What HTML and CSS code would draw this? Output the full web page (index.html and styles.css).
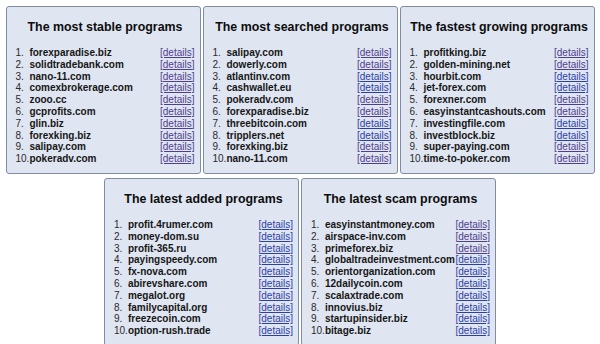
FILE: index.html
```html
<!DOCTYPE html>
<html>
<head>
<meta charset="utf-8">
<link rel="stylesheet" href="styles.css">
</head>
<body>
<div class="page">
  <div class="row">
    <div class="box">
      <h2 class="title">The most stable programs</h2>
      <table class="list">
        <tr><td class="n">1.</td><td class="d">forexparadise.biz</td><td class="l"><a class="v">[details]</a></td></tr>
        <tr><td class="n">2.</td><td class="d">solidtradebank.com</td><td class="l"><a class="v">[details]</a></td></tr>
        <tr><td class="n">3.</td><td class="d">nano-11.com</td><td class="l"><a class="v">[details]</a></td></tr>
        <tr><td class="n">4.</td><td class="d">comexbrokerage.com</td><td class="l"><a class="v">[details]</a></td></tr>
        <tr><td class="n">5.</td><td class="d">zooo.cc</td><td class="l"><a class="v">[details]</a></td></tr>
        <tr><td class="n">6.</td><td class="d">gcprofits.com</td><td class="l"><a class="v">[details]</a></td></tr>
        <tr><td class="n">7.</td><td class="d">glin.biz</td><td class="l"><a class="v">[details]</a></td></tr>
        <tr><td class="n">8.</td><td class="d">forexking.biz</td><td class="l"><a class="v">[details]</a></td></tr>
        <tr><td class="n">9.</td><td class="d">salipay.com</td><td class="l"><a class="v">[details]</a></td></tr>
        <tr><td class="n">10.</td><td class="d">pokeradv.com</td><td class="l"><a class="v">[details]</a></td></tr>
      </table>
    </div>
    <div class="box">
      <h2 class="title">The most searched programs</h2>
      <table class="list">
        <tr><td class="n">1.</td><td class="d">salipay.com</td><td class="l"><a class="v">[details]</a></td></tr>
        <tr><td class="n">2.</td><td class="d">dowerly.com</td><td class="l"><a class="v">[details]</a></td></tr>
        <tr><td class="n">3.</td><td class="d">atlantinv.com</td><td class="l"><a class="u">[details]</a></td></tr>
        <tr><td class="n">4.</td><td class="d">cashwallet.eu</td><td class="l"><a class="u">[details]</a></td></tr>
        <tr><td class="n">5.</td><td class="d">pokeradv.com</td><td class="l"><a class="v">[details]</a></td></tr>
        <tr><td class="n">6.</td><td class="d">forexparadise.biz</td><td class="l"><a class="v">[details]</a></td></tr>
        <tr><td class="n">7.</td><td class="d">threebitcoin.com</td><td class="l"><a class="u">[details]</a></td></tr>
        <tr><td class="n">8.</td><td class="d">tripplers.net</td><td class="l"><a class="u">[details]</a></td></tr>
        <tr><td class="n">9.</td><td class="d">forexking.biz</td><td class="l"><a class="v">[details]</a></td></tr>
        <tr><td class="n">10.</td><td class="d">nano-11.com</td><td class="l"><a class="v">[details]</a></td></tr>
      </table>
    </div>
    <div class="box">
      <h2 class="title">The fastest growing programs</h2>
      <table class="list">
        <tr><td class="n">1.</td><td class="d">profitking.biz</td><td class="l"><a class="v">[details]</a></td></tr>
        <tr><td class="n">2.</td><td class="d">golden-mining.net</td><td class="l"><a class="v">[details]</a></td></tr>
        <tr><td class="n">3.</td><td class="d">hourbit.com</td><td class="l"><a class="u">[details]</a></td></tr>
        <tr><td class="n">4.</td><td class="d">jet-forex.com</td><td class="l"><a class="u">[details]</a></td></tr>
        <tr><td class="n">5.</td><td class="d">forexner.com</td><td class="l"><a class="v">[details]</a></td></tr>
        <tr><td class="n">6.</td><td class="d">easyinstantcashouts.com</td><td class="l"><a class="v">[details]</a></td></tr>
        <tr><td class="n">7.</td><td class="d">investingfile.com</td><td class="l"><a class="u">[details]</a></td></tr>
        <tr><td class="n">8.</td><td class="d">investblock.biz</td><td class="l"><a class="u">[details]</a></td></tr>
        <tr><td class="n">9.</td><td class="d">super-paying.com</td><td class="l"><a class="v">[details]</a></td></tr>
        <tr><td class="n">10.</td><td class="d">time-to-poker.com</td><td class="l"><a class="v">[details]</a></td></tr>
      </table>
    </div>
  </div>
  <div class="row">
    <div class="box">
      <h2 class="title">The latest added programs</h2>
      <table class="list">
        <tr><td class="n">1.</td><td class="d">profit.4rumer.com</td><td class="l"><a class="u">[details]</a></td></tr>
        <tr><td class="n">2.</td><td class="d">money-dom.su</td><td class="l"><a class="u">[details]</a></td></tr>
        <tr><td class="n">3.</td><td class="d">profit-365.ru</td><td class="l"><a class="u">[details]</a></td></tr>
        <tr><td class="n">4.</td><td class="d">payingspeedy.com</td><td class="l"><a class="u">[details]</a></td></tr>
        <tr><td class="n">5.</td><td class="d">fx-nova.com</td><td class="l"><a class="u">[details]</a></td></tr>
        <tr><td class="n">6.</td><td class="d">abirevshare.com</td><td class="l"><a class="u">[details]</a></td></tr>
        <tr><td class="n">7.</td><td class="d">megalot.org</td><td class="l"><a class="u">[details]</a></td></tr>
        <tr><td class="n">8.</td><td class="d">familycapital.org</td><td class="l"><a class="u">[details]</a></td></tr>
        <tr><td class="n">9.</td><td class="d">freezecoin.com</td><td class="l"><a class="u">[details]</a></td></tr>
        <tr><td class="n">10.</td><td class="d">option-rush.trade</td><td class="l"><a class="u">[details]</a></td></tr>
      </table>
    </div>
    <div class="box">
      <h2 class="title">The latest scam programs</h2>
      <table class="list">
        <tr><td class="n">1.</td><td class="d">easyinstantmoney.com</td><td class="l"><a class="v">[details]</a></td></tr>
        <tr><td class="n">2.</td><td class="d">airspace-inv.com</td><td class="l"><a class="v">[details]</a></td></tr>
        <tr><td class="n">3.</td><td class="d">primeforex.biz</td><td class="l"><a class="v">[details]</a></td></tr>
        <tr><td class="n">4.</td><td class="d">globaltradeinvestment.com</td><td class="l"><a class="u">[details]</a></td></tr>
        <tr><td class="n">5.</td><td class="d">orientorganization.com</td><td class="l"><a class="u">[details]</a></td></tr>
        <tr><td class="n">6.</td><td class="d">12dailycoin.com</td><td class="l"><a class="u">[details]</a></td></tr>
        <tr><td class="n">7.</td><td class="d">scalaxtrade.com</td><td class="l"><a class="u">[details]</a></td></tr>
        <tr><td class="n">8.</td><td class="d">innovius.biz</td><td class="l"><a class="u">[details]</a></td></tr>
        <tr><td class="n">9.</td><td class="d">startupinsider.biz</td><td class="l"><a class="u">[details]</a></td></tr>
        <tr><td class="n">10.</td><td class="d">bitage.biz</td><td class="l"><a class="u">[details]</a></td></tr>
      </table>
    </div>
  </div>
</div>
</body>
</html>
```

FILE: styles.css
```css
html, body {
  margin: 0;
  padding: 0;
  background: #ffffff;
}
body {
  font-family: "Liberation Sans", Arial, sans-serif;
  color: #111;
}
.page {
  padding: 6px 0 0 0;
  display: flex;
  flex-direction: column;
  gap: 4px;
}
.row {
  display: flex;
  justify-content: center;
  gap: 2px;
}
.box {
  box-sizing: border-box;
  width: 195px;
  height: 168px;
  flex: none;
  border: 1px solid #7f8ca3;
  border-radius: 3px;
  background: #dfe5f1;
  padding: 12px 5px 0 9px;
}
.title {
  margin: 0 0 12px 0;
  font-size: 12.4px;
  line-height: 16px;
  font-weight: bold;
  text-align: center;
  color: #0d0d0d;
}
.list {
  width: 100%;
  border-collapse: collapse;
  border-spacing: 0;
  font-size: 10px;
  line-height: 11.8px;
}
.list td {
  padding: 0;
  white-space: nowrap;
}
.n {
  color: #2a2a2a;
  width: 1px;
}
.d {
  font-weight: bold;
  color: #161616;
}
.l {
  width: 1px;
  text-align: right;
}
.l a {
  text-decoration: underline;
  cursor: pointer;
}
.v {
  color: #4f3e8e;
}
.u {
  color: #2c3fa8;
}
```
